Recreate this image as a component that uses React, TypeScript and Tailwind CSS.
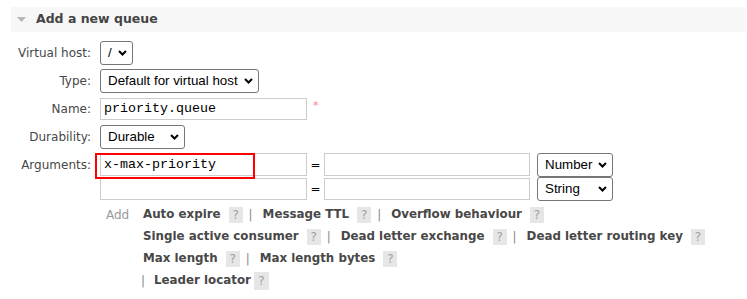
import React from "react";

function Chevron() {
  return (
    <svg width="9" height="6" viewBox="0 0 9 6" className="shrink-0">
      <path d="M1 1 L4.5 4.5 L8 1" stroke="#000" strokeWidth="2" fill="none" />
    </svg>
  );
}

function FakeSelect({ value, className }: { value: string; className: string }) {
  return (
    <div
      className={`flex h-[24px] items-center justify-between rounded-[3px] border border-[#767676] bg-white pl-[7px] pr-[5px] font-['Liberation_Sans',Arial,sans-serif] text-[13.33px] text-black ${className}`}
    >
      <span>{value}</span>
      <Chevron />
    </div>
  );
}

function TextBox({ value, className }: { value?: string; className: string }) {
  return (
    <div
      className={`flex items-center border border-[#ccc] bg-white pl-[3px] font-['Liberation_Mono','Courier_New',monospace] text-[13.33px] text-black ${className}`}
    >
      {value}
    </div>
  );
}

function Help() {
  return (
    <span className="ml-[8px] inline-flex h-[16px] w-[14px] items-center justify-center bg-[#e6e6e6] text-[12px] font-normal text-[#a0a0a0]">
      ?
    </span>
  );
}

function Pipe() {
  return <span className="ml-[6px] mr-[10px] font-normal text-[#888]">|</span>;
}

function Row({ label, children, className }: { label: string; children: React.ReactNode; className: string }) {
  return (
    <div className={`flex items-center ${className}`}>
      <div className="w-[91px] text-right">{label}</div>
      <div className="ml-[9px] flex items-center">{children}</div>
    </div>
  );
}

export default function App() {
  const lines = [
    ["Auto expire", "Message TTL", "Overflow behaviour"],
    ["Single active consumer", "Dead letter exchange", "Dead letter routing key"],
    ["Max length", "Max length bytes"],
  ];

  return (
    <div className="h-[299px] w-[747px] overflow-hidden bg-white font-['DejaVu_Sans',Verdana,sans-serif] text-[12px] text-[#484848]">
      <div className="ml-[11px] mt-[7px] flex h-[25px] w-[735px] items-center bg-[#f7f7f7]">
        <svg width="9" height="5" viewBox="0 0 9 5" className="ml-[6px]">
          <path d="M0 0 H9 L4.5 5 Z" fill="#b5b5b5" />
        </svg>
        <span className="ml-[10px] text-[12.5px] font-bold text-[#444]">Add a new queue</span>
      </div>

      <Row label="Virtual host:" className="mt-[9px] h-[24px]">
        <FakeSelect value="/" className="w-[33px]" />
      </Row>
      <Row label="Type:" className="mt-[4px] h-[24px]">
        <FakeSelect value="Default for virtual host" className="w-[159px]" />
      </Row>
      <Row label="Name:" className="mt-[5px] h-[22px]">
        <TextBox value="priority.queue" className="h-[22px] w-[207px]" />
        <span className="ml-[6px] -mt-[6px] text-[11px] text-[#ff8080]">*</span>
      </Row>
      <Row label="Durability:" className="mt-[5px] h-[24px]">
        <FakeSelect value="Durable" className="w-[85px]" />
      </Row>
      <Row label="Arguments:" className="mt-[4px] h-[23px]">
        <div className="relative flex items-center">
          <TextBox value="x-max-priority" className="h-[23px] w-[207px]" />
          <div className="absolute -left-[5px] top-0 h-[26px] w-[160px] border-2 border-[#ff0000]" />
        </div>
        <span className="w-[17px] text-center text-black">=</span>
        <TextBox className="h-[23px] w-[206px]" />
        <FakeSelect value="Number" className="ml-[7px] w-[76px]" />
      </Row>
      <Row label="" className="mt-[2px] h-[22px]">
        <TextBox className="h-[22px] w-[207px]" />
        <span className="w-[17px] text-center text-black">=</span>
        <TextBox className="h-[22px] w-[206px]" />
        <FakeSelect value="String" className="ml-[7px] h-[22px] w-[76px]" />
      </Row>

      <div className="ml-[106px] mt-[4px] flex">
        <div className="flex h-[22px] w-[37px] items-center text-[#999]">Add</div>
        <div className="flex flex-col text-[11.85px] font-bold">
          {lines.map((line, i) => (
            <div key={i} className="flex h-[22px] items-center">
              {line.map((item, j) => (
                <span key={item} className="flex items-center">
                  <span>{item}</span>
                  <Help />
                  {j < line.length - 1 && <Pipe />}
                </span>
              ))}
            </div>
          ))}
          <div className="-ml-[2px] flex h-[22px] items-center">
            <span className="mr-[9px] font-normal text-[#888]">|</span>
            <span>Leader locator</span>
            <span className="ml-[3px] inline-flex h-[18px] w-[15px] items-center justify-center bg-[#e6e6e6] text-[12px] font-normal text-[#a0a0a0]">
              ?
            </span>
          </div>
        </div>
      </div>
    </div>
  );
}
